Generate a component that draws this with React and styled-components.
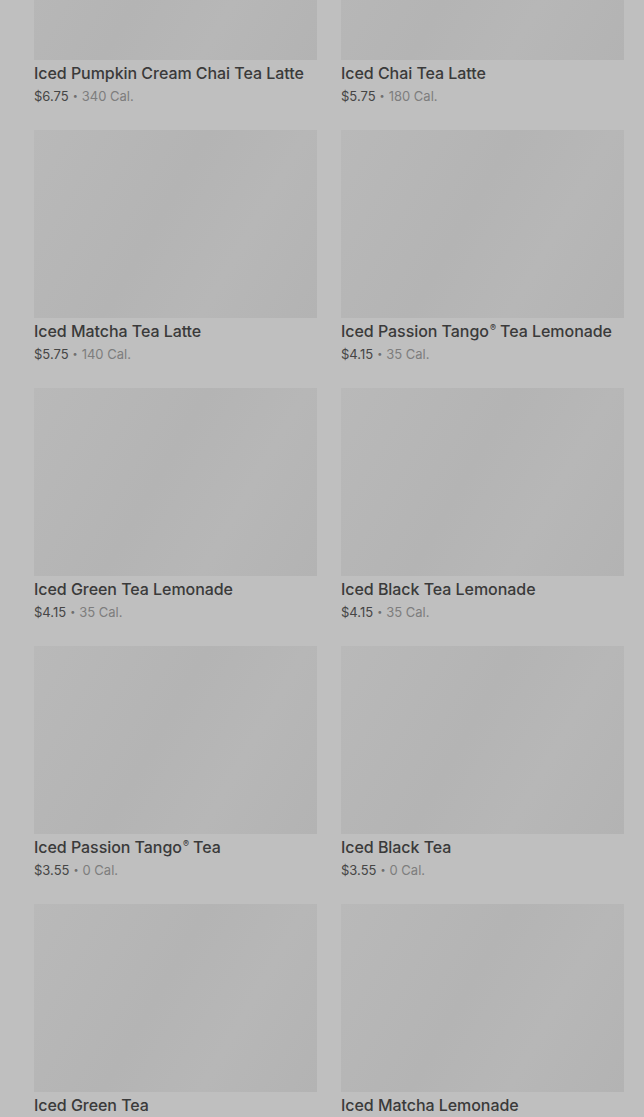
import React from "react";
import styled, { createGlobalStyle } from "styled-components";

const GlobalStyle = createGlobalStyle`
  html, body {
    margin: 0;
    padding: 0;
    background: #bfbfbf;
    overflow: hidden;
  }
  * {
    box-sizing: border-box;
  }
`;

const drinks = [
  { name: "Iced Pumpkin Cream Chai Tea Latte", price: "$6.75", cal: "340 Cal." },
  { name: "Iced Chai Tea Latte", price: "$5.75", cal: "180 Cal." },
  { name: "Iced Matcha Tea Latte", price: "$5.75", cal: "140 Cal." },
  { name: "Iced Passion Tango® Tea Lemonade", price: "$4.15", cal: "35 Cal." },
  { name: "Iced Green Tea Lemonade", price: "$4.15", cal: "35 Cal." },
  { name: "Iced Black Tea Lemonade", price: "$4.15", cal: "35 Cal." },
  { name: "Iced Passion Tango® Tea", price: "$3.55", cal: "0 Cal." },
  { name: "Iced Black Tea", price: "$3.55", cal: "0 Cal." },
  { name: "Iced Green Tea", price: "$3.55", cal: "0 Cal." },
  { name: "Iced Matcha Lemonade", price: "$4.95", cal: "90 Cal." },
];

// the registered mark sits small and raised, as on the menu site
const renderName = (name) => {
  const parts = name.split("®");
  if (parts.length === 1) return name;
  return (
    <>
      {parts[0]}
      <Mark>®</Mark>
      {parts[1]}
    </>
  );
};

function App() {
  return (
    <Page>
      <GlobalStyle />
      <Grid>
        {drinks.map((d) => (
          <Card key={d.name}>
            <Thumb />
            <Title>{renderName(d.name)}</Title>
            <Meta>
              <Price>{d.price}</Price>
              <Dot>•</Dot>
              <Cal>{d.cal}</Cal>
            </Meta>
          </Card>
        ))}
      </Grid>
    </Page>
  );
}

export default App;

const Page = styled.div`
  width: 644px;
  height: 1117px;
  overflow: hidden;
  background: #bfbfbf;
  font-family: Inter, "Noto Sans", sans-serif;
`;

const Grid = styled.div`
  display: grid;
  grid-template-columns: 283px 283px;
  column-gap: 24px;
  row-gap: 25px;
  padding: 0 20px 0 34px;
  margin-top: -128px;
`;

const Card = styled.div`
  display: flex;
  flex-direction: column;
`;

const Thumb = styled.div`
  height: 188px;
  background: linear-gradient(
    120deg,
    #b9b9b9 0%,
    #b4b4b4 45%,
    #b7b7b7 70%,
    #b3b3b3 100%
  );
`;

const Title = styled.div`
  margin-top: 3px;
  font-size: 16px;
  line-height: 20px;
  font-weight: 500;
  color: #3a3a3a;
  white-space: nowrap;
  letter-spacing: -0.05px;
`;

const Mark = styled.span`
  font-size: 9px;
  vertical-align: 6px;
  line-height: 0;
  margin-left: 1px;
`;

const Meta = styled.div`
  margin-top: 4px;
  display: flex;
  align-items: center;
  gap: 4px;
  font-size: 13px;
  line-height: 18px;
`;

const Price = styled.span`
  color: #454545;
`;

const Dot = styled.span`
  color: #6f6f6f;
  font-size: 9px;
`;

const Cal = styled.span`
  color: #7d7d7d;
`;
